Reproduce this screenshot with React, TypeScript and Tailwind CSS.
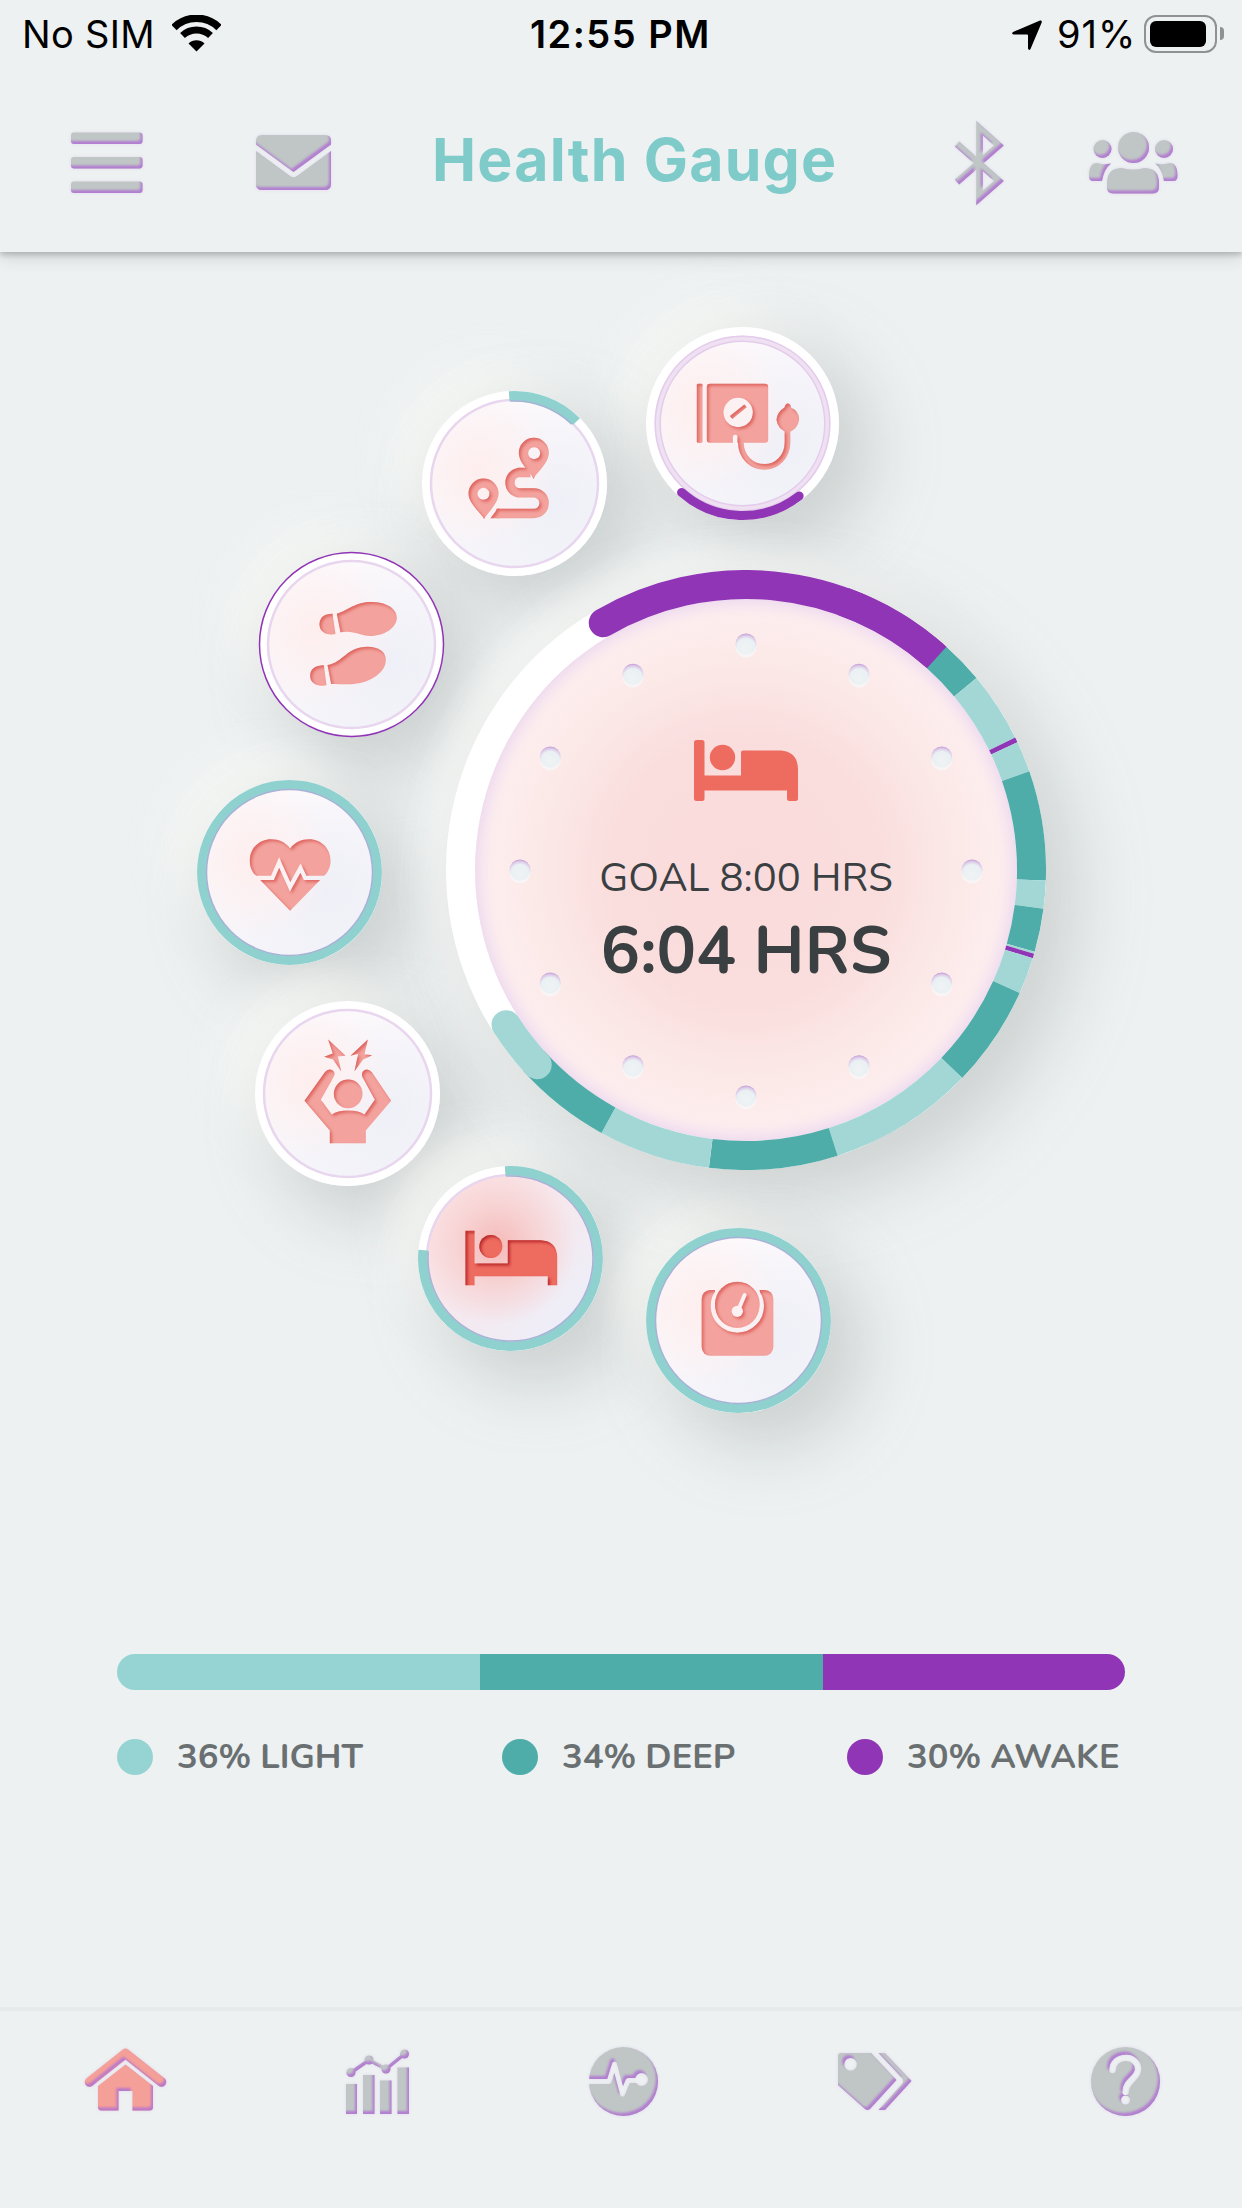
import type { ReactNode } from "react";

const TEAL = "#8fd1cf";
const LIGHT = "#a3d7d6";
const DEEP = "#4eaca9";
const AWAKE = "#9035b5";

function point(r: number, deg: number): string {
  const a = (deg * Math.PI) / 180;
  return `${(r * Math.sin(a)).toFixed(2)} ${(-r * Math.cos(a)).toFixed(2)}`;
}

function arc(r: number, from: number, to: number): string {
  return `M${point(r, from)} A${r} ${r} 0 ${to - from > 180 ? 1 : 0} 1 ${point(r, to)}`;
}

/* Shared inner-shadow filters: pressed coral icons and embossed grey icons. */
function Filters() {
  return (
    <svg width="0" height="0" className="absolute">
      <defs>
        <filter id="pressed" x="-5%" y="-5%" width="110%" height="110%" colorInterpolationFilters="sRGB">
          <feComponentTransfer in="SourceAlpha" result="inv">
            <feFuncA type="table" tableValues="1 0" />
          </feComponentTransfer>
          <feGaussianBlur in="inv" stdDeviation="4" />
          <feOffset dx="5" dy="6" result="off" />
          <feFlood floodColor="#d8514c" floodOpacity="0.75" />
          <feComposite in2="off" operator="in" />
          <feComposite in2="SourceAlpha" operator="in" result="shade" />
          <feMerge>
            <feMergeNode in="SourceGraphic" />
            <feMergeNode in="shade" />
          </feMerge>
        </filter>
        <filter id="pressed-strong" x="-5%" y="-5%" width="110%" height="110%" colorInterpolationFilters="sRGB">
          <feComponentTransfer in="SourceAlpha" result="inv">
            <feFuncA type="table" tableValues="1 0" />
          </feComponentTransfer>
          <feGaussianBlur in="inv" stdDeviation="4" />
          <feOffset dx="5" dy="6" result="off" />
          <feFlood floodColor="#b01d20" floodOpacity="0.85" />
          <feComposite in2="off" operator="in" />
          <feComposite in2="SourceAlpha" operator="in" result="shade" />
          <feMerge>
            <feMergeNode in="SourceGraphic" />
            <feMergeNode in="shade" />
          </feMerge>
        </filter>
        <filter id="emboss" x="-15%" y="-15%" width="130%" height="130%" colorInterpolationFilters="sRGB">
          <feGaussianBlur in="SourceAlpha" stdDeviation="1.8" result="halo" />
          <feFlood floodColor="#dccbe8" floodOpacity="0.75" />
          <feComposite in2="halo" operator="in" result="glow" />
          <feComponentTransfer in="SourceAlpha" result="inv">
            <feFuncA type="table" tableValues="1 0" />
          </feComponentTransfer>
          <feGaussianBlur in="inv" stdDeviation="1" />
          <feOffset dx="-1.8" dy="-2.6" result="off" />
          <feFlood floodColor="#b072d2" floodOpacity="0.85" />
          <feComposite in2="off" operator="in" />
          <feComposite in2="SourceAlpha" operator="in" result="shade" />
          <feMerge result="all">
            <feMergeNode in="glow" />
            <feMergeNode in="SourceGraphic" />
            <feMergeNode in="shade" />
          </feMerge>
          <feGaussianBlur in="all" stdDeviation="0.5" />
        </filter>
      </defs>
    </svg>
  );
}

function Embossed({ box, children, className = "", color = "#bfc6c5" }: { box: [number, number, number, number]; children: ReactNode; className?: string; color?: string }) {
  return (
    <svg width={box[2]} height={box[3]} viewBox={box.join(" ")} className={`block shrink-0 overflow-visible ${className}`}>
      <g filter="url(#emboss)" fill={color} stroke="none">
        {children}
      </g>
    </svg>
  );
}

function StatusBar() {
  return (
    <div className="flex h-[66px] items-center pt-[1px] text-[38px] leading-none text-black">
      <span className="ml-[22px] w-[134px] whitespace-nowrap tracking-[0.300px]">No SIM</span>
      <svg width="49" height="37" viewBox="0 0 49 37" className="ml-[16px] block">
        <path d="M2 12.5 A32 32 0 0 1 47 12.5" fill="none" stroke="#000" strokeWidth="7.5" />
        <path d="M10.500 20.500 A20.500 20.500 0 0 1 38.500 20.500" fill="none" stroke="#000" strokeWidth="7" />
        <path d="M24.500 36.500 L16.500 28.500 A11.500 11.500 0 0 1 32.500 28.500 Z" />
      </svg>
      <span className="ml-[309px] w-[184px] whitespace-nowrap font-semibold tracking-[1.500px]">12:55 PM</span>
      <svg width="30" height="30" viewBox="0 0 30 30" className="ml-[298px] mt-[2px] block">
        <path d="M28 0.500 Q30.500 0 29.500 3 L18.500 29 Q17 31 16 28.500 V15.500 Q16 14.500 15 14.500 H1.500 Q-1 13.500 1 12 Z" />
      </svg>
      <span className="ml-[15px] w-[80px] whitespace-nowrap tracking-[1px]">91%</span>
      <div className="ml-[7px] h-[38px] w-[73px] rounded-[12px] border-[2.500px] border-[#8f9192] p-[4px]">
        <div className="h-full w-[56px] rounded-[6px] bg-black" />
      </div>
      <div className="ml-[3px] h-[13px] w-[4px] rounded-r-full bg-[#8f9192]" />
    </div>
  );
}

function Header() {
  return (
    <header className="relative z-10 h-[252px] bg-[#edf1f2] shadow-[0_3px_5px_rgba(0,0,0,0.18),0_6px_16px_rgba(0,0,0,0.12)]">
      <StatusBar />
      <div className="flex h-[186px] items-start">
        <Embossed box={[71, 131, 72, 62]} className="ml-[71px] mt-[66px]">
          <rect x="71" y="131.500" width="71.500" height="11.500" rx="3" />
          <rect x="71" y="156" width="71.500" height="11.500" rx="3" />
          <rect x="71" y="180.500" width="71.500" height="11.500" rx="3" />
        </Embossed>
        <Embossed box={[256, 135, 75, 55]} className="ml-[113px] mt-[69px]">
          <path d="M256 144.500 V141 Q256 135 262 135 H325 Q331 135 331 141 V144.500 L293.500 172 Z" />
          <path d="M256 151 L290 176 Q293.500 178.500 297 176 L331 151 V184 Q331 190 325 190 H262 Q256 190 256 184 Z" />
        </Embossed>
        <h1 className="ml-[101px] mt-[58px] w-[406px] whitespace-nowrap text-[59px] font-bold leading-[72px] tracking-[1.200px] text-[#7fcbca]">Health Gauge</h1>
        <Embossed box={[955, 122, 47, 80]} className="ml-[117px] mt-[56px]">
          <path d="M957 144 L999 181 L979.500 198 V128 L999 145.500 L957 182" fill="none" stroke="#bfc6c5" strokeWidth="6.500" />
        </Embossed>
        <Embossed box={[1089, 131, 88, 63]} className="ml-[87px] mt-[65px]">
          <circle cx="1133.500" cy="147.500" r="15.500" />
          <path d="M1107 187 V183 Q1107 168 1122 168 Q1133 171 1144 168 Q1159 168 1159 183 V187 Q1159 193.500 1153 193.500 H1113 Q1107 193.500 1107 187 Z" />
          <circle cx="1102.500" cy="149" r="9" />
          <circle cx="1164" cy="149" r="9" />
          <path d="M1089 176 Q1089 163 1097 163 Q1102 165 1111 163.500 Q1104 169 1102 181 H1093 Q1089 181 1089 176 Z" />
          <path d="M1177.500 176 Q1177.500 163 1169.500 163 Q1164 165 1155.500 163.500 Q1162 169 1164 181 H1173.500 Q1177.500 181 1177.500 176 Z" />
        </Embossed>
      </div>
    </header>
  );
}

type Metric = {
  name: string;
  cx: number;
  cy: number;
  r: number;
  origin: [number, number];
  ring: ReactNode;
  icon: ReactNode;
  active?: boolean;
};

const lilacLine = <circle r="83.500" fill="none" stroke="#e8d6ef" strokeWidth="2.500" />;
const fullTeal = (
  <>
    <circle r="87.700" fill="none" stroke={TEAL} strokeWidth="9.500" />
    <circle r="83" fill="none" stroke="#a9b2d6" strokeWidth="1.500" />
  </>
);

/* Icon paths are drawn at three times the displayed size; origin is the circle's centre in that space. */
const metrics: Metric[] = [
  {
    name: "Blood pressure",
    cx: 742.5,
    cy: 423.5,
    r: 96.5,
    origin: [1028, 341],
    ring: (
      <>
        <circle r="85" fill="none" stroke="#efe0f2" strokeWidth="6" />
        <circle r="87.300" fill="none" stroke="#e4cdec" strokeWidth="1.500" />
        <circle r="82.300" fill="none" stroke="#e4cdec" strokeWidth="1.500" />
        <path d={arc(92, 142, 221.500)} fill="none" stroke={AWAKE} strokeWidth="9" strokeLinecap="round" />
      </>
    ),
    icon: (
      <>
        <mask id="cuff">
          <rect x="800" y="150" width="500" height="400" fill="#fff" />
          <circle cx="1015" cy="308" r="44" fill="#000" />
          <path d="M1006 405 V382" stroke="#000" strokeWidth="14" strokeLinecap="round" />
        </mask>
        <g mask="url(#cuff)">
          <rect x="891" y="222" width="17" height="177" rx="4" />
          <rect x="921" y="222" width="184" height="177" rx="9" />
        </g>
        <path d="M994 323 L1037 288" stroke="#f3a29d" strokeWidth="11" />
        <path d="M1023 385 V395 C1023 445 1058 471 1094 471 S1163 442 1163 398 V360" fill="none" stroke="#f3a29d" strokeWidth="17" />
        <path d="M1164 281 Q1172 281 1174 294 Q1198 304 1198 330 Q1194 360 1164 368 Q1134 360 1130 330 Q1132 306 1154 293 Q1157 281 1164 281 Z" />
      </>
    ),
  },
  {
    name: "Distance",
    cx: 514.5,
    cy: 483.5,
    r: 92.5,
    origin: [344, 521],
    ring: (
      <>
        {lilacLine}
        <path d={arc(87.700, -3.500, 45)} fill="none" stroke={TEAL} strokeWidth="9.500" />
        <path d={arc(82.500, -3, 44)} fill="none" stroke="#9fb4d2" strokeWidth="1.500" />
      </>
    ),
    icon: (
      <>
        <path
          fillRule="evenodd"
          d="M253 628 C246 612 206 582 206 551 A45 45 0 0 1 296 551 C296 582 260 612 253 628 Z M251 534 a18 18 0 1 0 0.100 0 Z"
        />
        <path
          fillRule="evenodd"
          d="M401 508 C396 490 357 462 357 429 A45 45 0 0 1 447 429 C447 462 408 490 401 508 Z M403 412 a18 18 0 1 0 0.100 0 Z"
        />
        <path d="M392 488 H356 a31 31 0 0 0 0 61 H402 a31 31 0 0 1 0 62 H290" fill="none" stroke="#f3a29d" strokeWidth="28" />
        <path d="M272 625 L293 597 H300 V625 Z" />
      </>
    ),
  },
  {
    name: "Steps",
    cx: 351.3,
    cy: 644.2,
    r: 92.5,
    origin: [514, 342.500],
    ring: (
      <>
        {lilacLine}
        <circle r="92" fill="none" stroke={AWAKE} strokeWidth="1.500" />
      </>
    ),
    icon: (
      <>
        <path d="M457 250 L466 311 C440 316 418 306 418 282 C418 262 432 250 457 250 Z" />
        <path d="M470 250 C505 240 525 214 578 215 C625 217 650 238 650 263 C650 290 615 317 570 317 C540 316 520 298 481 306 Z" />
        <path d="M431 405 L439 465 C410 470 390 458 390 436 C390 416 405 405 431 405 Z" />
        <path d="M442 404 C490 396 500 349 562 349 C595 349 617 364 617 388 C617 425 575 455 520 461 C500 463 475 460 453 461 Z" />
      </>
    ),
  },
  {
    name: "Heart rate",
    cx: 289.5,
    cy: 872,
    r: 92.5,
    origin: [329, 1026],
    ring: fullTeal,
    icon: (
      <>
        <mask id="beat">
          <rect x="150" y="850" width="400" height="400" fill="#fff" />
          <path d="M200 1042 H278 L298 996 L331 1069 L362 1013 L376 1042 H470" fill="none" stroke="#000" strokeWidth="13" />
        </mask>
        <path
          mask="url(#beat)"
          d="M331 954 C345 935 365 926 388 926 C425 926 452 955 452 990 C452 1010 445 1024 436 1033 L331 1141 L226 1033 C217 1024 210 1010 210 990 C210 955 237 926 274 926 C297 926 317 935 331 954 Z"
        />
      </>
    ),
  },
  {
    name: "Stress",
    cx: 347.3,
    cy: 1093,
    r: 92.5,
    origin: [352, 339],
    ring: lilacLine,
    icon: (
      <>
        <path d="M294 177 L346 226 L323 228 L333 272 L309 237 L282 229 L308 219 Z" />
        <path d="M413 177 L361 226 L384 220 L373 272 L399 237 L426 224 L403 221 Z" />
        <circle cx="354" cy="340" r="43" />
        <path d="M284 275 Q295 262 308 270 Q318 278 309 292 L272 358 L305 402 Q322 390 354 390 Q386 390 403 402 L434 358 L398 292 Q391 277 402 269 Q414 263 425 275 L483 361 L407 450 V488 H299 V450 L223 361 Z" />
      </>
    ),
  },
  {
    name: "Sleep",
    cx: 510.3,
    cy: 1258.5,
    r: 92.5,
    origin: [841, 835],
    active: true,
    ring: (
      <>
        {lilacLine}
        <path d={arc(87.700, -3.500, 275.500)} fill="none" stroke={TEAL} strokeWidth="9.500" />
        <path d={arc(82.500, -3, 275)} fill="none" stroke="#a9b2d6" strokeWidth="1.500" />
      </>
    ),
    icon: (
      <>
        <circle cx="782" cy="799" r="34.500" />
        <path d="M833 780 H930 Q981 782 981 832 V915 H953 V888 H733 V915 H706 V752 H733 V850 H833 Z" />
      </>
    ),
  },
  {
    name: "Weight",
    cx: 738.3,
    cy: 1320.5,
    r: 92.5,
    origin: [415.500, 361.500],
    ring: fullTeal,
    icon: (
      <>
        <mask id="scale">
          <rect x="280" y="220" width="300" height="300" fill="#fff" />
          <circle cx="412" cy="318" r="73" fill="none" stroke="#000" strokeWidth="14" />
          <rect x="345" y="240" width="134" height="40" fill="#000" />
          <circle cx="412" cy="312" r="67" fill="#fff" />
          <circle cx="412" cy="334" r="17" fill="#000" />
          <path d="M415 330 L434 285" stroke="#000" strokeWidth="12" strokeLinecap="round" />
        </mask>
        <g mask="url(#scale)">
          <rect x="305" y="270" width="215" height="197" rx="26" />
          <circle cx="412" cy="312" r="68" />
        </g>
      </>
    ),
  },
];

function MetricButton({ m }: { m: Metric }) {
  return (
    <button
      aria-label={m.name}
      className="absolute rounded-full bg-white"
      style={{ left: m.cx - m.r, top: m.cy - m.r - 252, width: m.r * 2, height: m.r * 2 }}
    >
      <span
        className={
          m.active
            ? "absolute inset-[9px] rounded-full bg-[radial-gradient(circle_at_42%_42%,#f5bab8_0%,#f7cfcfd9_28%,#f6eaf000_58%),linear-gradient(135deg,#fbe4e6_20%,#eeeef8_85%)]"
            : "absolute inset-[9px] rounded-full bg-[radial-gradient(circle_at_28%_42%,#feeeee_0%,#fdf1f2cc_25%,#fdf4f500_52%),radial-gradient(circle_at_74%_62%,#efeff7_0%,#f1f1f8aa_32%,#f4f4fb00_64%),linear-gradient(160deg,#fefafc,#f2f3f9)]"
        }
      />
      <svg width={m.r * 2} height={m.r * 2} viewBox={`${-m.r} ${-m.r} ${m.r * 2} ${m.r * 2}`} className="absolute inset-0 overflow-visible">
        {m.ring}
        <g transform={`scale(0.333333) translate(${-m.origin[0]} ${-m.origin[1]})`}>
          <g fill={m.active ? "#ee6b60" : "#f3a29d"} filter={m.active ? "url(#pressed-strong)" : "url(#pressed)"}>
            {m.icon}
          </g>
        </g>
      </svg>
    </button>
  );
}

const segments: [number, number, string][] = [
  [41.9, 50.2, DEEP],
  [50.2, 63.8, LIGHT],
  [63.8, 64.8, AWAKE],
  [64.8, 70.8, LIGHT],
  [70.8, 92, DEEP],
  [92, 97.4, LIGHT],
  [97.4, 105.8, DEEP],
  [105.8, 106.2, LIGHT],
  [106.2, 107.1, AWAKE],
  [107.1, 114.2, LIGHT],
  [114.2, 133.9, DEEP],
  [133.9, 162.2, LIGHT],
  [162.2, 187.1, DEEP],
  [187.1, 208.8, LIGHT],
  [208.8, 228, DEEP],
];

const hours = Array.from({ length: 12 }, (_, i) => (i * Math.PI) / 6);

function SleepDial() {
  return (
    <section className="absolute left-[446px] top-[318px] size-[600px] rounded-full bg-white">
      <div className="absolute inset-[29px] rounded-full bg-[radial-gradient(circle,#fadbdc_0%,#fadddd_34%,#fbe8e6_52%,#fdeeee_68%,#fdf0ef_100%)] shadow-[inset_0_0_16px_4px_#ead6f0]" />
      <svg width="600" height="600" viewBox="-300 -300 600 600" className="absolute inset-0">
        <defs>
          <radialGradient id="pit" cx="0.5" cy="0.68" r="0.68">
            <stop offset="0" stopColor="#eff3f4" />
            <stop offset="0.650" stopColor="#eaf0f3" />
            <stop offset="0.850" stopColor="#dccbe8" />
            <stop offset="1" stopColor="#c398d6" />
          </radialGradient>
        </defs>
        <path d={arc(285.500, -30, 41)} fill="none" stroke={AWAKE} strokeWidth="29" strokeLinecap="round" />
        <path d={arc(285.500, 20, 42)} fill="none" stroke={AWAKE} strokeWidth="29" />
        {segments.map(([from, to, color]) => (
          <path key={from} d={arc(285.5, from, to)} fill="none" stroke={color} strokeWidth="29" />
        ))}
        <path d={arc(285.5, 227, 237.2)} fill="none" stroke={LIGHT} strokeWidth="29" strokeLinecap="round" />
        {hours.map((a) => (
          <g key={a} transform={`translate(${226 * Math.sin(a)} ${-226 * Math.cos(a)})`}>
            <ellipse cy="3" rx="10.500" ry="10.500" fill="#f7f6f7" opacity="0.8" />
            <circle r="10.500" fill="url(#pit)" />
          </g>
        ))}
      </svg>
      <div className="relative flex flex-col items-center pt-[170px] text-[#3a4042] [font-family:Nunito,Lato,sans-serif]">
        <svg width="104" height="61" viewBox="0 0 104 61" fill="#ee6b60">
          <circle cx="28.500" cy="17.500" r="12.700" />
          <rect width="10.500" height="61" rx="2.500" />
          <rect x="93" y="38" width="11" height="23" rx="2.500" />
          <path d="M49 10.500 H87 Q104 12 104 30 V50.500 H4 V35.500 H47 V12.500 Q47 10.500 49 10.500 Z" />
        </svg>
        <p className="mt-[52px] whitespace-nowrap text-[40px] leading-[50px]">GOAL 8:00 HRS</p>
        <p className="mt-[8px] whitespace-nowrap text-[66px] font-bold leading-[80px]">6:04 HRS</p>
      </div>
    </section>
  );
}

function Gauge() {
  return (
    <main className="relative h-[1402px] w-full">
      {metrics.map((m) => (
        <div
          key={m.name}
          className="absolute rounded-full shadow-[26px_26px_66px_8px_rgba(150,156,152,0.36),-26px_-26px_44px_2px_rgba(247,248,245,0.85)]"
          style={{ left: m.cx - m.r, top: m.cy - m.r - 252, width: m.r * 2, height: m.r * 2 }}
        />
      ))}
      <div className="absolute left-[446px] top-[318px] size-[600px] rounded-full shadow-[26px_26px_70px_4px_rgba(150,156,152,0.36),-16px_-16px_36px_4px_rgba(248,249,247,0.85)]" />
      <SleepDial />
      {metrics.map((m) => (
        <MetricButton key={m.name} m={m} />
      ))}
    </main>
  );
}

function Legend({ dot, label, className }: { dot: string; label: string; className: string }) {
  return (
    <div className={`flex items-center ${className}`}>
      <span className={`size-9 shrink-0 rounded-full ${dot}`} />
      <span className="ml-[24px] whitespace-nowrap">{label}</span>
    </div>
  );
}

function SleepStages() {
  return (
    <section className="h-[353px] px-[117px]">
      <div className="flex h-[36px] w-[1008px] overflow-hidden rounded-[18px]">
        <div className="w-[363px] bg-[#96d4d3]" />
        <div className="w-[343px] bg-[#4eaca9]" />
        <div className="w-[302px] bg-[#9035b5]" />
      </div>
      <div className="mt-[42px] flex h-[50px] items-center text-[34.500px] font-bold text-[#6a7071] [font-family:Nunito,Lato,sans-serif]">
        <Legend dot="bg-[#96d4d3]" label="36% LIGHT" className="w-[385px]" />
        <Legend dot="bg-[#4eaca9]" label="34% DEEP" className="w-[345px]" />
        <Legend dot="bg-[#9035b5]" label="30% AWAKE" className="w-[278px]" />
      </div>
    </section>
  );
}

function BottomNav() {
  return (
    <nav className="flex h-[201px] items-start justify-between border-t-[4px] border-[#e6eaea] pl-[85px] pr-[82px]">
      <Embossed box={[85, 2048, 81, 62]} className="mt-[38px]" color="#f49f98">
        <path d="M89.500 2081 L125.500 2052.500 L161.500 2081" fill="none" stroke="#f49f98" strokeWidth="9.500" strokeLinecap="round" strokeLinejoin="round" />
        <path d="M125.500 2063.500 L153 2085 V2106 Q153 2109.500 149.500 2109.500 H132.500 V2090 H118.500 V2109.500 H101.500 Q98 2109.500 98 2106 V2085 Z" />
      </Embossed>
      <Embossed box={[349, 2048, 63, 65]} className="mt-[38px]">
        <rect x="349" y="2083" width="11" height="30" />
        <rect x="366" y="2074" width="11.500" height="39" />
        <rect x="383" y="2079.500" width="11.500" height="33.500" />
        <rect x="400.500" y="2066.500" width="11.500" height="46.500" />
        <path d="M354 2071.500 L372 2059 L389 2068 L407.500 2053" fill="none" stroke="#bfc6c5" strokeWidth="3.500" />
        <circle cx="354" cy="2071.500" r="4.500" />
        <circle cx="372" cy="2059" r="4.500" />
        <circle cx="389" cy="2068" r="4.500" />
        <circle cx="407.500" cy="2053" r="4.500" />
      </Embossed>
      <Embossed box={[590, 2047, 69, 69]} className="mt-[36px]">
        <mask id="pulse">
          <rect x="580" y="2037" width="90" height="90" fill="#fff" />
          <path d="M588 2081.500 H610 L615.500 2064 L623.500 2094 L629 2080.500 H640" fill="none" stroke="#000" strokeWidth="5" strokeLinejoin="round" />
          <circle cx="642.500" cy="2079.500" r="6.500" fill="#000" />
        </mask>
        <circle cx="624.500" cy="2081.500" r="34.500" mask="url(#pulse)" />
      </Embossed>
      <Embossed box={[838, 2052, 73, 57]} className="mt-[42px]">
        <path
          fillRule="evenodd"
          d="M841 2052 H871 L896.500 2079 L870 2108 Q867.500 2110 865 2108 L838 2084 V2055 Q838 2052 841 2052 Z M850.500 2057 a6.300 6.300 0 1 0 0.100 0 Z"
        />
        <path d="M878.500 2052 H885 L911.500 2080 L885 2109 H878.500 L902 2083 Q904.500 2080 902 2077 Z" />
      </Embossed>
      <Embossed box={[1091, 2047, 69, 69]} className="mt-[36px]">
        <mask id="help">
          <rect x="1081" y="2037" width="90" height="90" fill="#fff" />
          <path d="M1112.500 2070 C1112.500 2054 1138 2054 1138 2069 C1138 2079 1125.500 2080 1125.500 2092" fill="none" stroke="#000" strokeWidth="6.500" strokeLinecap="round" />
          <circle cx="1125.500" cy="2100" r="4.500" fill="#000" />
        </mask>
        <circle cx="1125.500" cy="2081.500" r="34.500" mask="url(#help)" />
      </Embossed>
    </nav>
  );
}

export default function App() {
  return (
    <div className="relative flex h-[2208px] w-[1242px] flex-col overflow-hidden bg-[#edf1f2] [font-family:Inter,sans-serif]">
      <Filters />
      <Header />
      <Gauge />
      <SleepStages />
      <BottomNav />
    </div>
  );
}
